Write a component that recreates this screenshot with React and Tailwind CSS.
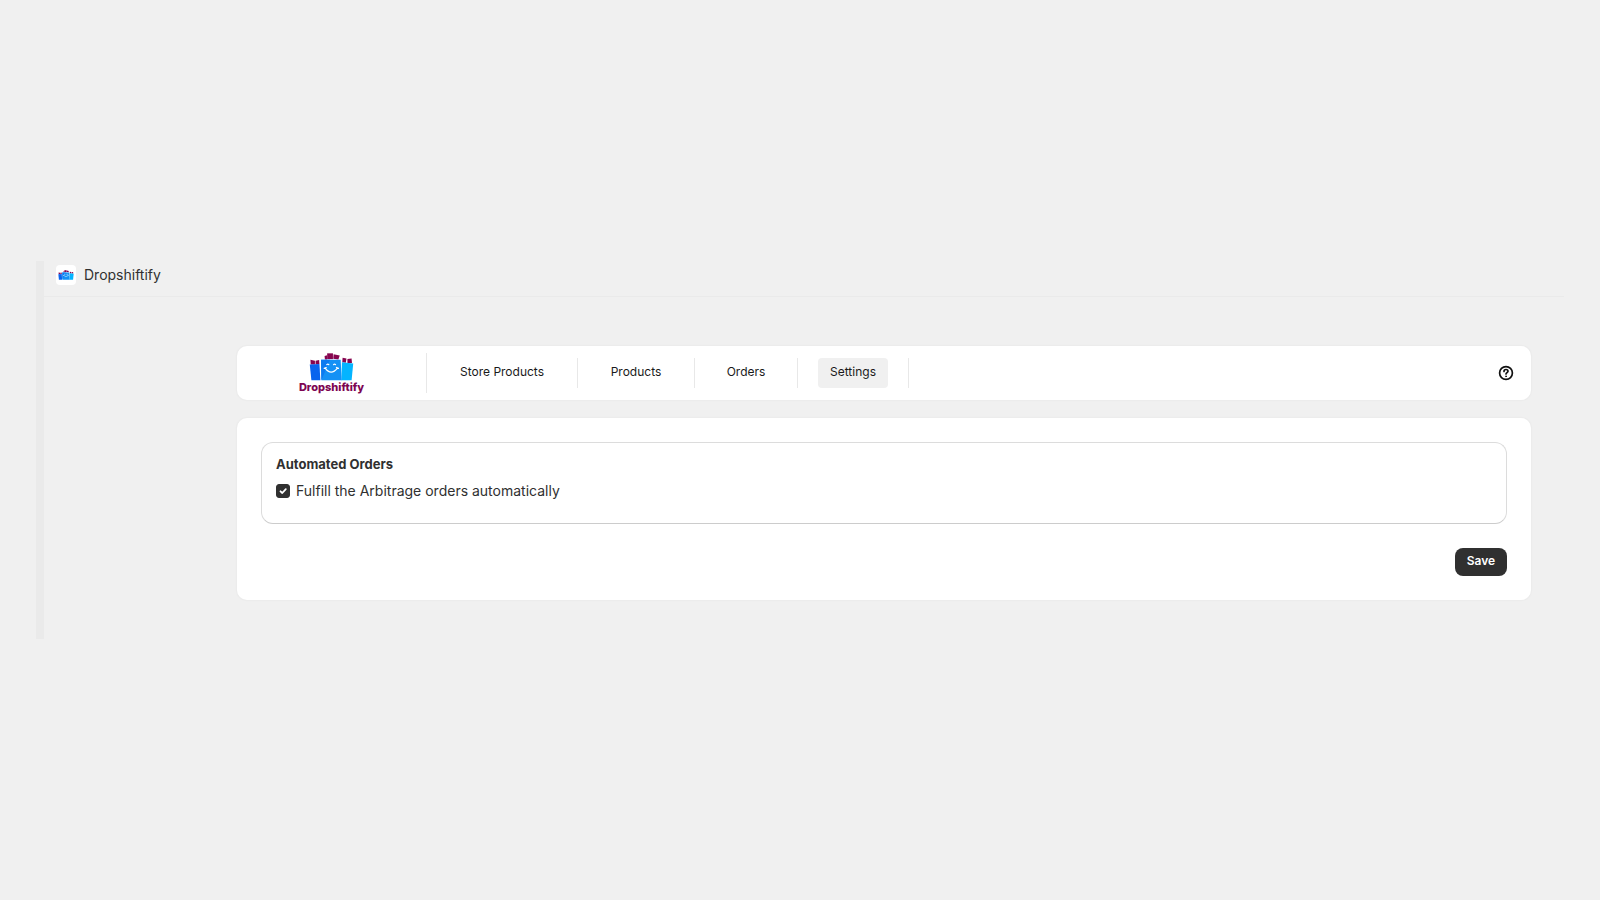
import { useState } from 'react'

const links = [
  { label: 'Store Products', width: 'w-[110px]' },
  { label: 'Products', width: 'w-[76px]' },
  { label: 'Orders', width: 'w-[62px]' },
  { label: 'Settings', width: 'w-[70px]' },
]

export default function App() {
  const [page, setPage] = useState('Settings')
  const [automated, setAutomated] = useState(true)

  return (
    <div className="min-h-screen bg-[#f0f0f0] flex items-center px-9 font-['Inter',sans-serif] text-[#303030]">
      <div className="w-full flex">
        <div className="w-2 shrink-0 bg-[#eaeaea]" />
        <div className="flex-1">
          <header className="h-9 flex items-center gap-2 pl-3 pb-[7px] border-b border-[#eaeaea]">
            <span className="w-5 h-5 rounded bg-white flex items-center justify-center">
              <Bags className="w-4 h-[10px]" />
            </span>
            <h1 className="text-sm">Dropshiftify</h1>
          </header>

          <main className="pt-[49px] pb-[39px] pl-[193px] pr-[33px] space-y-[18px]">
            <nav className="h-[54px] bg-white rounded-[10px] shadow-[0_0_1px_1px_#ebebeb] flex items-center pr-[17px]">
              <div className="w-[190px] h-10 border-r border-[#e8e8e8] flex flex-col items-center justify-center">
                <Bags className="w-[47px] h-[29px]" />
                <span className="text-[11px] leading-[12px] font-extrabold text-[#7d0552]">Dropshiftify</span>
              </div>
              <ul className="flex">
                {links.map(({ label, width }) => (
                  <li key={label} className="px-5 border-r border-[#e8e8e8]">
                    <a
                      href="#"
                      onClick={() => setPage(label)}
                      className={`${width} h-[30px] pb-[2px] flex items-center justify-center rounded text-[12px] whitespace-nowrap text-[#1a1a1a] ${page === label ? 'bg-[#f0f0f0]' : ''}`}
                    >
                      {label}
                    </a>
                  </li>
                ))}
              </ul>
              <button aria-label="Help" className="ml-auto text-[#111]">
                <HelpIcon />
              </button>
            </nav>

            <section className="bg-white rounded-[10px] shadow-[0_0_1px_1px_#ebebeb] p-6">
              <div className="border border-[#dcdcdc] border-b-[#cccccc] rounded-xl px-[14px] pt-[11px] pb-[22px]">
                <h2 className="text-[13px] leading-5 font-bold">Automated Orders</h2>
                <label className="mt-[7px] flex items-center gap-[6px] text-[14px] leading-5">
                  <span className="relative w-[14px] h-[14px] flex">
                    <input
                      type="checkbox"
                      checked={automated}
                      onChange={e => setAutomated(e.target.checked)}
                      className="appearance-none w-[14px] h-[14px] rounded-[3px] border border-[#303030] checked:bg-[#303030]"
                    />
                    {automated && (
                      <svg viewBox="0 0 14 14" className="absolute inset-0 pointer-events-none" fill="none" stroke="white" strokeWidth="1.8" strokeLinecap="round" strokeLinejoin="round">
                        <path d="M4.5 7.3 6.3 9 9.8 5.2" />
                      </svg>
                    )}
                  </span>
                  Fulfill the Arbitrage orders automatically
                </label>
              </div>
              <div className="mt-6 flex justify-end">
                <button className="w-[52px] h-7 pb-[2px] rounded-lg bg-[#303030] text-white text-[12px] font-semibold">Save</button>
              </div>
            </section>
          </main>
        </div>
      </div>
    </div>
  )
}

function Bags({ className }) {
  return (
    <svg viewBox="0 0 141 87" className={className}>
      <g fill="#86054f">
        <path d="M5 21 19 24 19 36 6 36Z" />
        <path d="M21 24 32 22 33 34 21 36Z" />
        <path d="M57 1 75 1 75 19 57 19Z" />
        <path d="M49 9 57 7 57 20 50 20Z" />
        <path d="M77 4 96 8 92 20 76 18Z" />
        <path d="M105 15 117 17 115 30 104 29Z" />
        <path d="M120 19 133 17 134 31 120 31Z" />
      </g>
      <path d="M3 36 33 34 36 85 8 85Z" fill="#0864ee" />
      <path d="M103 29 138 33 133 85 101 85Z" fill="#04b4ff" />
      <path d="M38 21 99 21 102 85 39 85Z" fill="#1491f5" />
      <path d="M38 21 66 21 39 85Z" fill="#0c7bf0" />
      <g fill="none" stroke="white" strokeLinecap="round">
        <path d="M51 47Q69 72 89 47M48 48 54 45M86 45 92 48" strokeWidth="4" />
        <path d="M56 36Q59 33 62 36M77 36Q80 33 83 36" strokeWidth="4" />
      </g>
    </svg>
  )
}

function HelpIcon() {
  return (
    <svg viewBox="0 0 16 16" className="w-4 h-4" fill="none" stroke="currentColor" strokeWidth="1.7" strokeLinecap="round">
      <circle cx="8" cy="8" r="6.4" />
      <path d="M6 6.4C6 5.2 6.9 4.5 8 4.5s2 .7 2 1.8c0 1.2-2 1.5-2 2.7" />
      <circle cx="8" cy="11.3" r=".5" fill="currentColor" strokeWidth=".8" />
    </svg>
  )
}
